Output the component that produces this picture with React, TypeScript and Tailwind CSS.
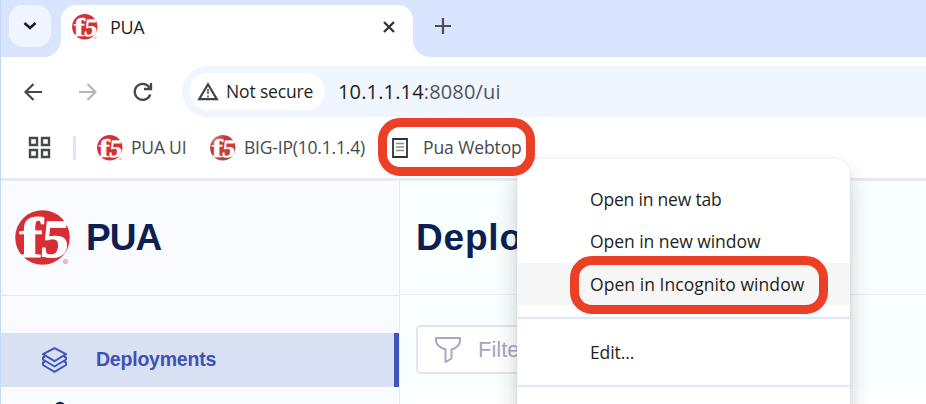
import React from "react";

function F5Logo({ size, shaded = false }: { size: number; shaded?: boolean }) {
  return (
    <svg width={size} height={size} viewBox="0 0 56 56" className="block shrink-0">
      <defs>
        <linearGradient id="ball" x1="0.1" y1="0" x2="0.9" y2="1">
          <stop offset="0" stopColor="#c9a59c" />
          <stop offset="0.3" stopColor="#c8302e" />
          <stop offset="0.65" stopColor="#cb4440" />
          <stop offset="1" stopColor="#5d4a45" />
        </linearGradient>
      </defs>
      <circle cx="27.5" cy="27.5" r="27.3" fill={shaded ? "url(#ball)" : "#d72d35"} />
      <g fill="#fff" stroke="#fff" strokeWidth="0.8" fontFamily="'Liberation Serif', serif" fontWeight="700">
        <text x="4" y="46.500" fontSize="56" textLength="24" lengthAdjust="spacingAndGlyphs">f</text>
        <text x="29.500" y="46.500" fontSize="54" textLength="28" lengthAdjust="spacingAndGlyphs" transform="skewX(-6)">5</text>
      </g>
      {!shaded && <circle cx="50.5" cy="51.5" r="2" fill="#f3c3c9" stroke="#e59aa4" strokeWidth="1" />}
    </svg>
  );
}

function TabStrip() {
  return (
    <div className="flex h-[57px] shrink-0 bg-[#d9e5fe] pl-[9px] pt-[5px]">
      <div className="flex h-[42px] w-[42px] items-center justify-center rounded-[14px] bg-[#eff6ff]">
        <svg width="14" height="10" viewBox="0 0 14 10" fill="none" stroke="#1c1d1f" strokeWidth="2.6">
          <path d="M1.5 2l5.5 5 5.5-5" />
        </svg>
      </div>
      <svg width="17" height="17" viewBox="0 0 17 17" className="ml-[-7px] self-end fill-white">
        <path d="M17 0v17H0A17 17 0 0 0 17 0Z" />
      </svg>
      <div className="flex h-[52px] w-[352px] items-center rounded-t-[15px] bg-white pb-[9px] pl-[11px] pr-[17px]">
        <F5Logo size={26} />
        <span className="ml-[12px] font-['Open_Sans',sans-serif] text-[18px] leading-none tracking-[-0.3px] text-[#1e1f21]">PUA</span>
        <svg width="14" height="14" viewBox="0 0 14 14" className="ml-auto" stroke="#303236" strokeWidth="2.3">
          <path d="M2 2l10 10M12 2L2 12" />
        </svg>
      </div>
      <svg width="17" height="17" viewBox="0 0 17 17" className="self-end fill-white">
        <path d="M0 0v17h17A17 17 0 0 1 0 0Z" />
      </svg>
      <svg width="16" height="16" viewBox="0 0 16 16" className="ml-[5px] mt-[13px]" stroke="#4a4e55" strokeWidth="2.2">
        <path d="M8 0v16M0 8h16" />
      </svg>
    </div>
  );
}

function AddressRow() {
  return (
    <div className="flex h-[60px] shrink-0 items-end bg-white pl-[24px]">
      <div className="flex h-[51px] w-[158px] items-center">
        <svg width="18" height="18" viewBox="0 0 18 18" fill="none" stroke="#45484d" strokeWidth="2.2">
          <path d="M18 9H2M9.5 1L1.5 9l8 8" />
        </svg>
        <svg width="18" height="18" viewBox="0 0 18 18" fill="none" stroke="#b3b5b8" strokeWidth="2.2" className="ml-[37px]">
          <path d="M0 9h16M8.500 1l8 8-8 8" />
        </svg>
        <svg width="20" height="20" viewBox="0 0 20 20" fill="none" stroke="#45484d" strokeWidth="2.3" className="ml-[36px]">
          <path d="M17.300 12.500A8 8 0 1 1 16 4.800" />
          <path d="M18 1v6h-7" />
          <path d="M18.500 2v6h-6z" fill="#45484d" stroke="none" />
        </svg>
      </div>
      <div className="flex h-[51px] flex-1 items-center rounded-l-full bg-[#eff6ff] pl-[7px]">
        <div className="flex h-[37px] w-[136px] items-center rounded-full bg-white pl-[8px]">
          <svg width="22" height="19" viewBox="0 0 22 19" fill="none" stroke="#3f4246" strokeWidth="2.2">
            <path d="M11 2.300L2.200 17.200h17.600Z" />
            <path d="M11 7v5M11 13.500v2" stroke="#777a7e" />
          </svg>
          <span className="ml-[7px] whitespace-nowrap font-['Open_Sans',sans-serif] text-[17.500px] leading-none tracking-[-0.15px] text-[#1e1f21]">Not secure</span>
        </div>
        <span className="ml-[13px] whitespace-nowrap font-['Open_Sans',sans-serif] text-[20px] leading-none tracking-[0.15px] text-[#51555a]">
          <span className="text-[#1e1f21]">10.1.1.14</span>:8080/ui
        </span>
      </div>
    </div>
  );
}

function BookmarksBar() {
  return (
    <div className="flex h-[61px] shrink-0 items-center bg-white pl-[28px] font-['Open_Sans',sans-serif] text-[17.500px] leading-none text-[#45484d]">
      <svg width="23" height="23" viewBox="0 0 23 23" fill="none" stroke="#45484d" strokeWidth="2.400">
        <path d="M2 2h7v7H2zM14 2h7v7h-7zM2 14h7v7H2zM14 14h7v7h-7z" />
      </svg>
      <div className="ml-[22px] h-[24px] w-[3px] rounded bg-[#d9e5fe]" />
      <div className="ml-[21px] flex w-[113px] items-center whitespace-nowrap">
        <F5Logo size={26} />
        <span className="ml-[8px] tracking-[-0.2px]">PUA UI</span>
      </div>
      <div className="flex w-[182px] items-center whitespace-nowrap">
        <F5Logo size={26} shaded />
        <span className="ml-[8px] tracking-[-0.2px]">BIG-IP(10.1.1.4)</span>
      </div>
      <svg width="16" height="20" viewBox="0 0 16 20" fill="none">
        <path d="M1 1h14v18H1z" stroke="#303236" strokeWidth="1.800" />
        <path d="M4 5.500h8M4 9h8M4 12.500h8" stroke="#8b8d90" strokeWidth="1.300" />
      </svg>
      <span className="ml-[15px] whitespace-nowrap tracking-[-0.1px]">Pua Webtop</span>
    </div>
  );
}

function Sidebar() {
  return (
    <div className="flex w-[399px] shrink-0 flex-col border-r border-[#e6eaf6] bg-[#f9fbff]">
      <div className="flex h-[115px] shrink-0 items-center border-b border-[#e3e8f1] pl-[14px]">
        <F5Logo size={56} />
        <span className="ml-[15px] pb-[1px] font-['Liberation_Sans',sans-serif] text-[37px] font-bold leading-none tracking-[-1px] text-[#0d1e53]">PUA</span>
      </div>
      <div className="mt-[37px] flex h-[54px] shrink-0 items-center border-r-[5px] border-[#4253bf] bg-[#d8e1f4] pl-[41px]">
        <svg width="25" height="26" viewBox="0 0 25 26" fill="none" stroke="#4253bf" strokeWidth="2" strokeLinejoin="round">
          <path d="M12.500 1.200L24 7.200 12.500 14.200 1 7.200Z" />
          <path d="M3 9.500L1 10.500V12.500l11.500 7 11.500-7V10.500l-2-1" />
          <path d="M3 14.500L1 15.500V18l11.500 6.800L24 18v-2.500L22 14.500" />
        </svg>
        <span className="ml-[29px] font-['Liberation_Sans',sans-serif] text-[19.500px] font-bold leading-none tracking-[-0.22px] text-[#4050b5]">Deployments</span>
      </div>
      <svg width="12" height="12" viewBox="0 0 12 12" className="ml-[53px] mt-[14px] shrink-0" fill="none" stroke="#0d1e53" strokeWidth="2.500">
        <circle cx="6" cy="6" r="4" />
      </svg>
    </div>
  );
}

function Content() {
  return (
    <div className="flex min-w-0 flex-1 flex-col bg-[#f9ffff]">
      <div className="flex h-[114px] shrink-0 items-center border-b border-[#eceff8] pl-[16px]">
        <span className="font-['Liberation_Sans',sans-serif] text-[37px] font-bold leading-none tracking-[0.800px] text-[#0d1e53]">Deplo</span>
      </div>
      <div className="ml-[16px] mt-[30px] flex h-[49px] w-[260px] shrink-0 items-center rounded-[5px] border-2 border-[#e1e4ef] bg-white pl-[17px]">
        <svg width="26" height="26" viewBox="0 0 26 26" fill="none" stroke="#a4a8c2" strokeWidth="2" strokeLinejoin="round">
          <path d="M1 1h24v3c0 3-3 7-8.500 8.500v9L10.500 25V12.500C5 11 1 7 1 4Z" />
        </svg>
        <span className="ml-[17px] font-['Liberation_Sans',sans-serif] text-[22px] leading-none text-[#a4a8c2]">Filte</span>
      </div>
      <div className="ml-[16px] mt-[15px] flex-1 bg-white" />
    </div>
  );
}

function ContextMenu() {
  return (
    <div className="absolute left-[517px] top-[159px] flex h-[280px] w-[333px] flex-col whitespace-nowrap rounded-[16px] bg-white pt-[20px] font-['Open_Sans',sans-serif] text-[17.500px] text-[#1e1f21] shadow-[0_14px_22px_rgba(40,40,50,0.22),0_0_3px_rgba(60,80,60,0.12)]">
      <div className="flex h-[42px] items-center pb-[2px] pl-[73px]"><span className="tracking-[-0.2px]">Open in new tab</span></div>
      <div className="flex h-[42px] items-center pb-[2px] pl-[73px]"><span className="tracking-[-0.05px]">Open in new window</span></div>
      <div className="flex h-[42px] items-center bg-[#f6f6f7] pl-[73px]"><span className="tracking-[0.05px]">Open in Incognito window</span></div>
      <div className="mt-[12px] h-[2px] bg-[#dde8fd]" />
      <div className="flex h-[66px] items-center pl-[73px]"><span className="tracking-[-0.1px]">Edit...</span></div>
      <div className="h-[2px] bg-[#dde8fd]" />
    </div>
  );
}

export default function App() {
  return (
    <div className="relative flex h-[404px] w-[926px] flex-col overflow-hidden bg-white">
      <TabStrip />
      <AddressRow />
      <BookmarksBar />
      <div className="h-[2px] shrink-0 bg-[#e8e9eb]" />
      <div className="flex min-h-0 flex-1 border-t border-[#e6edfa] pl-px">
        <Sidebar />
        <Content />
      </div>
      <div className="absolute inset-y-0 left-0 w-px bg-[#c3d8f7]" />
      <ContextMenu />
      <div className="absolute left-[378px] top-[118px] h-[58px] w-[157px] rounded-[22px] border-[9px] border-[#eb4026]" />
      <div className="absolute left-[570px] top-[256px] h-[58px] w-[258px] rounded-[22px] border-[9px] border-[#eb4026]" />
    </div>
  );
}
